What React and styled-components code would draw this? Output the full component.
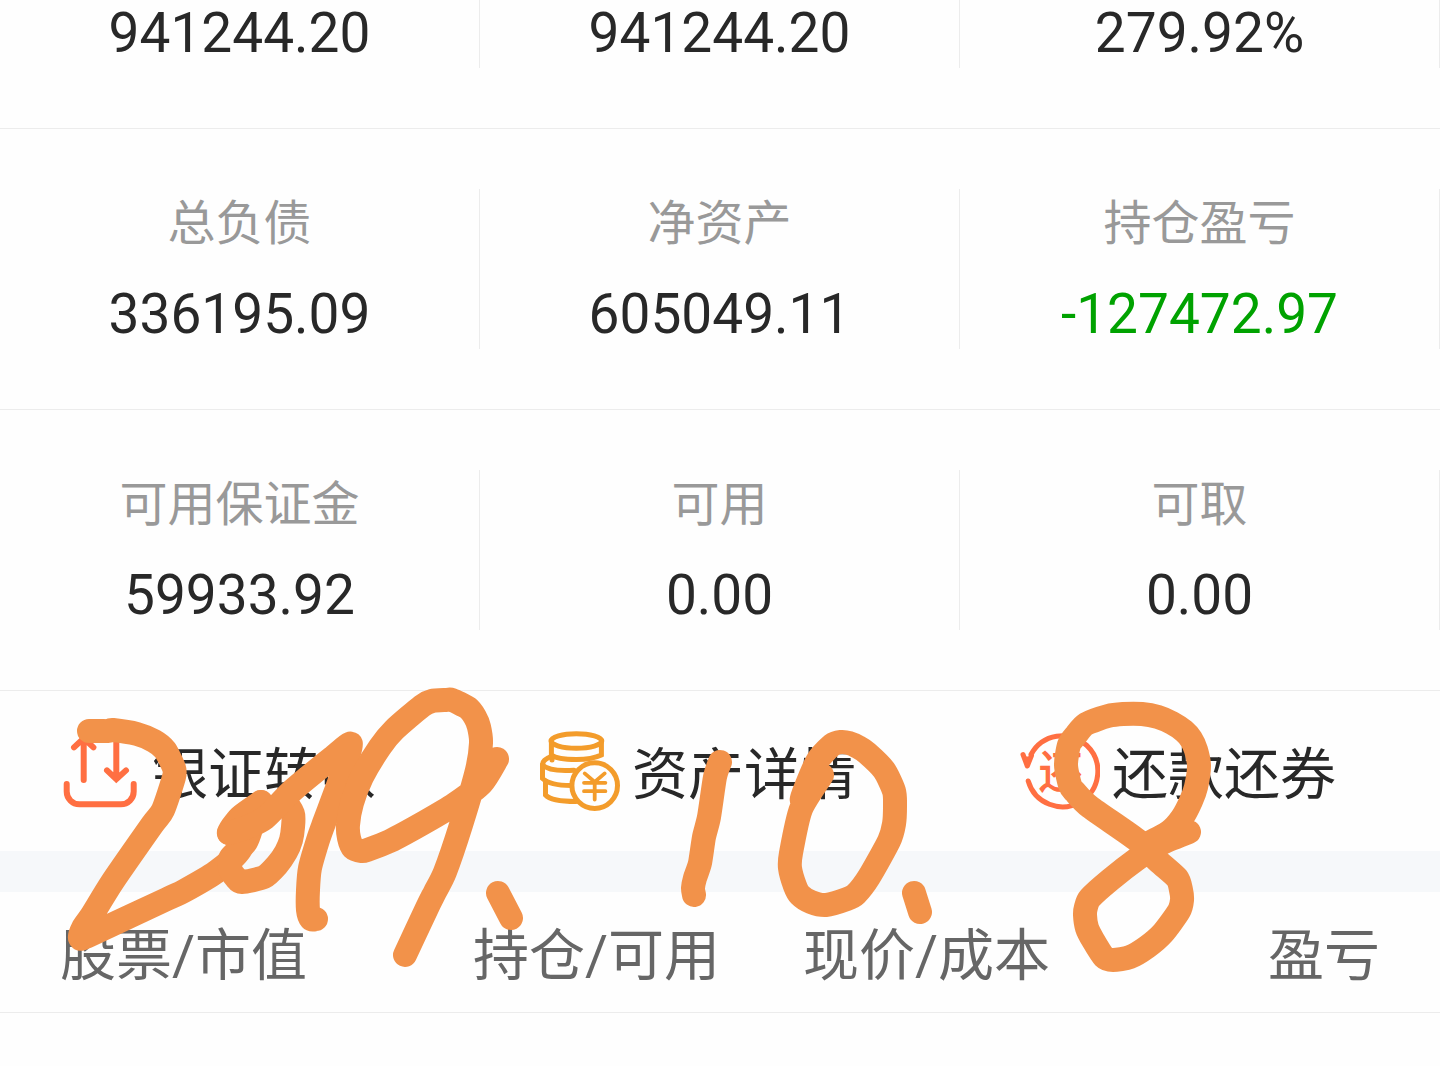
import styled, { createGlobalStyle } from "styled-components";

const summary = [
  [
    { label: "总负债", value: "336195.09" },
    { label: "净资产", value: "605049.11" },
    { label: "持仓盈亏", value: "-127472.97", down: true },
  ],
  [
    { label: "可用保证金", value: "59933.92" },
    { label: "可用", value: "0.00" },
    { label: "可取", value: "0.00" },
  ],
];

const totals = ["941244.20", "941244.20", "279.92%"];

const strokes = [
  // 2
  "89,731 108,731 113,730 137,734 154,741 165,750 174,768 174,777 163,810 152,825 113,881 92,915 83,928 80,938 90,935 167,899 184,891 216,872 240,850 261,802",
  // 0
  "261,802 240,817 229,833 252,820 246,842 231,857 230,868 236,878 242,882 264,877 277,865 286,852 291,840 293,827 293,814 284,803 262,815",
  // 1
  "229,833 245,828 265,818 293,790 332,758 351,744 340,780 324,823 318,840 310,868 308,890 308,910 311,919 316,919",
  // 9
  "497,759 482,783 455,804 425,822 390,841 367,850 362,851 353,848 349,838 348,825 352,803 362,777 380,747 394,730 422,706 432,701 446,700 452,700 468,708 475,717 479,727 481,743 477,770 461,825 445,872 435,892 427,908 405,955",
  "498,893 511,918",
  // 10
  "720,762 715,777 709,817 704,837 700,863 695,878 693,888 694,895",
  "822,775 802,800 808,782 818,760 832,745 841,742 849,743 858,747 867,753 884,770 894,791 895,806 894,824 889,841 869,877 856,894 847,899 826,905 811,902 800,895 795,886 790,868 791,853 801,809 822,775",
  "914,893 920,912",
  // 8
  "1189,832 1160,844 1137,859 1110,880 1090,898 1086,907 1085,915 1087,928 1093,940 1104,957 1113,960 1130,957 1147,947 1163,933 1179,911 1182,900 1181,890 1177,878 1158,861 1137,840 1090,807 1075,792 1070,785 1066,765 1069,745 1076,735 1086,724 1108,716 1123,714 1142,714 1158,717 1172,723 1184,731 1191,739 1196,750 1199,766 1196,787 1191,801 1182,818 1169,832 1143,846",
];

// soft curve through every point of a pen stroke
const toCurve = (stroke) => {
  const pts = stroke.split(" ").map((p) => p.split(",").map(Number));
  const k = 0.12;
  let d = `M${pts[0]}`;
  for (let i = 1; i < pts.length; i++) {
    const a = pts[i - 1];
    const b = pts[i];
    const before = pts[i - 2] || a;
    const after = pts[i + 1] || b;
    const c1 = [a[0] + (b[0] - before[0]) * k, a[1] + (b[1] - before[1]) * k];
    const c2 = [b[0] - (after[0] - a[0]) * k, b[1] - (after[1] - a[1]) * k];
    d += `C${c1} ${c2} ${b}`;
  }
  return d;
};

const TransferIcon = () => (
  <Icon viewBox="0 0 80 80" $color="#ff6f42" $stroke={6} aria-hidden="true">
    <path d="M6.7 53v7.5a12.8 12.8 0 0 0 12.8 12.8h41.4a12.8 12.8 0 0 0 12.8-12.8V53" />
    <path d="M23.7 49V8M14 16.4l9.7-9 9.7 9M56.3 8v40M47 39.4l9.3 8.8 9.7-8.8" />
  </Icon>
);

const AssetIcon = () => (
  <Icon viewBox="0 0 80 80" $color="#f39c2b" $stroke={5} aria-hidden="true">
    <ellipse cx="36.4" cy="10" rx="25.4" ry="7.2" />
    <path d="M11.4 10V24Q17 28.400 36.400 28.600Q52 28.400 61.400 24V10" />
    <path d="M11 25.500C5 28 2.500 30 2.500 34V47.500C9 53.500 20 54.500 31 54.500" />
    <path d="M2.500 34C8 39.500 22 40 34 39.200M12 25V29" />
    <path d="M5.500 50V64C10 69 22 70.500 36 70.500" />
    <circle cx="54.7" cy="54.6" r="22.8" fill="#fefefe" />
    <path
      d="M44.700 42.400l10 8.600 10-8.600M44 51.800h21.400M44 60.200h21.400M54.700 51v17.600"
      strokeWidth="3.800"
    />
  </Icon>
);

const RepayIcon = () => (
  <Icon viewBox="0 0 80 80" $color="#ff6f42" $stroke={5} aria-hidden="true">
    <path d="M8.200 50A35.500 35.500 0 1 0 11 23.500" />
    <path d="M3 23.500L7.300 35L11.500 24.500" strokeLinejoin="round" />
    <path d="M5.500 27L7.300 33L10 27Z" strokeWidth="3" />
    <IconText x="41" y="58" textAnchor="middle">
      还
    </IconText>
  </Icon>
);

const actions = [
  { name: "银证转账", icon: <TransferIcon /> },
  { name: "资产详情", icon: <AssetIcon /> },
  { name: "还款还券", icon: <RepayIcon /> },
];

const App = () => {
  return (
    <Page>
      <GlobalStyle />
      <Row $first>
        {totals.map((value, i) => (
          <Cell key={i}>
            <Value>{value}</Value>
          </Cell>
        ))}
      </Row>
      {summary.map((row, i) => (
        <Row key={i}>
          {row.map((item) => (
            <Cell key={item.label}>
              <Label>{item.label}</Label>
              <Value $down={item.down}>{item.value}</Value>
            </Cell>
          ))}
        </Row>
      ))}

      <Marked>
        <Actions>
          {actions.map((item) => (
            <ActionBtn key={item.name} type="button">
              {item.icon}
              <ActionName>{item.name}</ActionName>
            </ActionBtn>
          ))}
        </Actions>
        <Band />
        <Holdings>
          <Table>
            <thead>
              <tr>
                <Th scope="col">股票/市值</Th>
                <Th scope="col">持仓/可用</Th>
                <Th scope="col">现价/成本</Th>
                <Th scope="col">盈亏</Th>
              </tr>
            </thead>
          </Table>
        </Holdings>
        <Handwriting viewBox="0 691 1440 322" role="img" aria-label="2019.10.8">
          {strokes.map((stroke) => (
            <path key={stroke} d={toCurve(stroke)} />
          ))}
        </Handwriting>
      </Marked>
    </Page>
  );
};

export default App;

const GlobalStyle = createGlobalStyle`
  body {
    margin: 0;
    background-color: #fefefe;
    font-family: Roboto, "Noto Sans CJK SC", sans-serif;
  }
`;
const Page = styled.main`
  overflow: hidden;
  color: #282828;
`;
const Row = styled.section`
  display: grid;
  grid-template-columns: repeat(3, 1fr);
  padding: ${({ $first }) => ($first ? "0 0 60px" : "60px 0")};
  border-bottom: 1px solid #ececec;
`;
const Cell = styled.div`
  display: flex;
  flex-direction: column;
  gap: 22px;
  padding-bottom: 2px;
  text-align: center;
  border-right: 1px solid #ececec;
`;
const Label = styled.div`
  font-size: 48px;
  line-height: 70px;
  color: #999;
`;
const Value = styled.div`
  font-size: 55px;
  line-height: 66px;
  color: ${({ $down }) => ($down ? "#00a200" : "#282828")};
`;
const Marked = styled.div`
  position: relative;
`;
const Actions = styled.nav`
  display: grid;
  grid-template-columns: repeat(3, 1fr);
`;
const ActionBtn = styled.button`
  display: flex;
  align-items: center;
  gap: 12px;
  height: 160px;
  padding: 0 0 0 60px;
  border: none;
  background: none;
  color: inherit;
  font-family: inherit;
  font-size: 56px;
  white-space: nowrap;
  cursor: pointer;
`;
const ActionName = styled.span`
  padding-bottom: 4px;
`;
const Icon = styled.svg`
  flex: none;
  width: 80px;
  height: 80px;
  fill: none;
  stroke: ${({ $color }) => $color};
  stroke-width: ${({ $stroke }) => $stroke};
  stroke-linecap: round;
`;
const IconText = styled.text`
  fill: #ff6f42;
  stroke: none;
  font-size: 45px;
  font-weight: 500;
`;
const Band = styled.div`
  height: 41px;
  background-color: #f6f8fa;
`;
const Holdings = styled.section`
  padding: 0 60px;
  border-bottom: 1px solid #ececec;
`;
const Table = styled.table`
  width: 100%;
  table-layout: fixed;
  border-collapse: collapse;
`;
const Th = styled.th`
  height: 112px;
  padding: 8px 0 0;
  font-size: 56px;
  font-weight: normal;
  line-height: 68px;
  text-align: right;
  white-space: nowrap;
  color: #666;

  &:first-child {
    text-align: left;
  }
`;
const Handwriting = styled.svg`
  position: absolute;
  top: 0;
  left: 0;
  width: 100%;
  height: 100%;
  overflow: visible;
  pointer-events: none;
  fill: none;
  stroke: #f2924a;
  stroke-width: 24;
  stroke-linecap: round;
  stroke-linejoin: round;
`;
